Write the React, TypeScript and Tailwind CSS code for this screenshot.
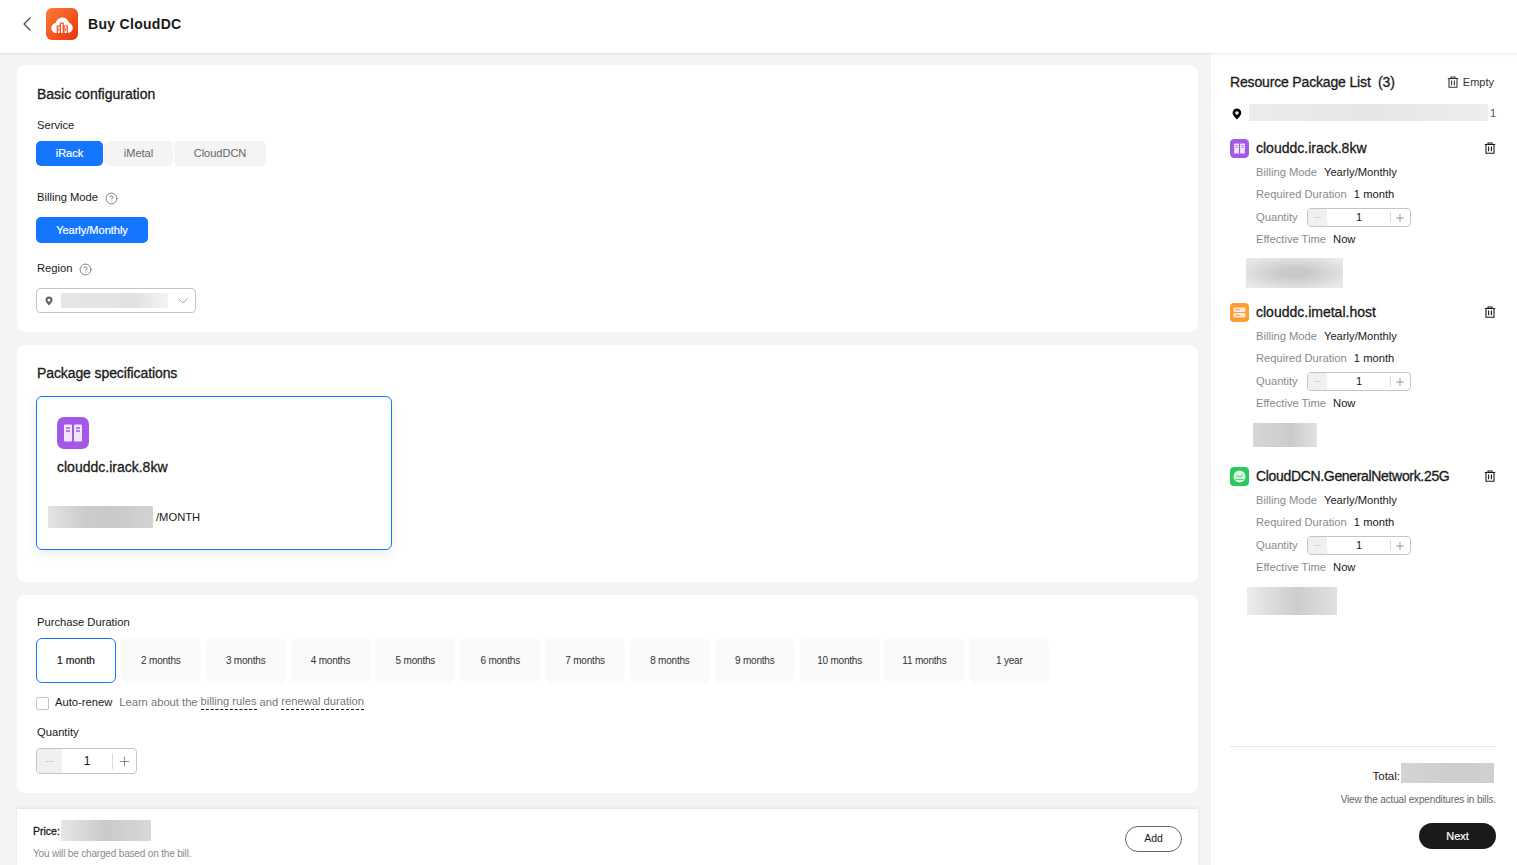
import React from "react";
import { ChevronLeft, ChevronDown, CircleHelp, Minus, Plus } from "lucide-react";

const FONT = "font-['Liberation_Sans',Arial,sans-serif]";
const MED = "[-webkit-text-stroke:0.3px_currentColor]";

function Blur({ className }: { className: string }) {
  return <div className={`shrink-0 ${className}`} />;
}

function Trash({ className }: { className: string }) {
  return (
    <svg viewBox="0 0 12 12" className={className} fill="none" stroke="currentColor">
      <path d="M0.8 2.5H11.2M4 2.5V1H8V2.5M2 2.5V11.3H10V2.5M4.6 4.6V9.2M7.4 4.6V9.2" strokeWidth="1.1" />
    </svg>
  );
}

function Pin({ className }: { className: string }) {
  return (
    <svg viewBox="0 0 12 14" className={className}>
      <path fillRule="evenodd" d="M6 0.3A5.3 5.3 0 0 0 0.7 5.6C0.7 9 6 13.8 6 13.8S11.3 9 11.3 5.6A5.3 5.3 0 0 0 6 0.3ZM6 3.6A2.1 2.1 0 1 1 6 7.8A2.1 2.1 0 0 1 6 3.6Z" fill="currentColor" />
    </svg>
  );
}

function RackIcon({ className }: { className: string }) {
  return (
    <svg viewBox="0 0 32 32" className={className}>
      <rect width="32" height="32" rx="7" fill="#a259e8" />
      <rect x="7" y="7.5" width="8" height="17" rx="1" fill="#f1e6fc" />
      <rect x="17" y="7.5" width="8" height="17" rx="1" fill="#f1e6fc" />
      <path d="M9 11H13M9 14H13M19 11H23M19 14H23" stroke="#a259e8" strokeWidth="1.3" />
    </svg>
  );
}

function HostIcon({ className }: { className: string }) {
  return (
    <svg viewBox="0 0 19 19" className={className}>
      <rect width="19" height="19" rx="4" fill="#ff9c38" />
      <rect x="3.5" y="4.5" width="12" height="4.4" rx="1" fill="#ffecd8" />
      <rect x="3.5" y="10.1" width="12" height="4.4" rx="1" fill="#ffecd8" />
      <path d="M5.5 6.7H10M5.5 12.3H10" stroke="#ff9c38" strokeWidth="1" />
    </svg>
  );
}

function NetIcon({ className }: { className: string }) {
  return (
    <svg viewBox="0 0 19 19" className={className}>
      <rect width="19" height="19" rx="4" fill="#2bc85c" />
      <circle cx="9.5" cy="9.5" r="6" fill="#dcf7e4" />
      <path d="M6 10.5L8 8.5L10 10.5L13 7.5" stroke="#2bc85c" strokeWidth="1" fill="none" />
      <path d="M5.5 12.5H13.5" stroke="#2bc85c" strokeWidth="0.8" />
    </svg>
  );
}

function Logo() {
  return (
    <div className="w-8 h-8 rounded-[6px] bg-[linear-gradient(135deg,#ff7d33,#e8340e)] flex items-center justify-center shrink-0">
      <svg viewBox="0 0 32 32" className="w-8 h-8">
        <path d="M10.5 25C7.5 25 5.3 22.7 5.3 19.9C5.3 17.3 7.2 15.2 9.7 14.9C10.6 11.7 13.2 9.4 16.4 9.4C19.8 9.4 22.5 11.9 23.1 15.1C25.2 15.6 26.7 17.5 26.7 19.8C26.7 22.7 24.5 25 21.6 25Z" fill="#fff" />
        <path d="M11.3 25V18.2H14.4V25M14.4 25V15.2H17.2V25M18 25V18H21.3V25" fill="none" stroke="#f4502a" strokeWidth="1.2" />
        <path d="M12.8 20V23M19.6 20V23" stroke="#f4502a" strokeWidth="0.9" />
      </svg>
    </div>
  );
}

function Stepper({ large }: { large?: boolean }) {
  return large ? (
    <div className="flex w-[101px] h-[26px] border border-[#c4c4c4] rounded-[4px] overflow-hidden items-center">
      <div className="w-[25px] h-full bg-[#f0f0f0] flex items-center justify-center text-[#c0c0c0]">
        <Minus size={13} strokeWidth={1.2} />
      </div>
      <div className="flex-1 text-center text-[12px] text-[#191919]">1</div>
      <div className="w-px h-[16px] bg-[#dcdcdc]" />
      <div className="w-[23px] flex items-center justify-center text-[#666]">
        <Plus size={15} strokeWidth={1.2} />
      </div>
    </div>
  ) : (
    <div className="flex w-[104px] h-[19px] border border-[#c4c4c4] rounded-[4px] overflow-hidden items-center">
      <div className="w-[19px] h-full bg-[#f0f0f0] flex items-center justify-center text-[#c0c0c0]">
        <Minus size={11} strokeWidth={1.3} />
      </div>
      <div className="flex-1 pl-[2px] text-center text-[11px] leading-none text-[#191919]">1</div>
      <div className="w-px h-[11px] bg-[#dcdcdc]" />
      <div className="w-[19px] flex items-center justify-center text-[#666]">
        <Plus size={12} strokeWidth={1.3} />
      </div>
    </div>
  );
}

function Item({ icon, name, blur, nameClass }: { icon: React.ReactNode; name: string; blur: string; nameClass?: string }) {
  const row = "flex items-center gap-[7px] pl-[26px] text-[11.2px] leading-none";
  const k = "text-[#8a8a8a]";
  const v = "text-[#191919]";
  return (
    <div className="h-[164px] shrink-0">
      <div className="flex items-center h-[20px]">
        {icon}
        <span className={`ml-[7px] text-[14px] text-[#191919] ${MED} ${nameClass ?? ""}`}>{name}</span>
        <Trash className="w-[12px] h-[12px] ml-auto -mt-px text-[#191919]" />
      </div>
      <div className="mt-[4px]">
        <div className={`${row} h-[22px]`}><span className={k}>Billing Mode</span><span className={v}>Yearly/Monthly</span></div>
        <div className={`${row} h-[22px]`}><span className={k}>Required Duration</span><span className={v}>1 month</span></div>
        <div className={`${row} h-[23px] gap-[9px]`}><span className={k}>Quantity</span><Stepper /></div>
        <div className={`${row} h-[22px]`}><span className={k}>Effective Time</span><span className={v}>Now</span></div>
      </div>
      <Blur className={blur} />
    </div>
  );
}

const MONTHS = ["2 months", "3 months", "4 months", "5 months", "6 months", "7 months", "8 months", "9 months", "10 months", "11 months", "1 year"];

export default function App() {
  const label = "h-[16px] pt-[2px] flex items-center text-[11.2px] text-[#191919] leading-none";
  const tab = "h-[25px] flex items-center justify-center bg-[#f4f4f4] text-[#666] text-[11px] rounded-[5px]";
  const help = "text-[#666]";
  return (
    <div className={`${FONT} h-screen overflow-hidden flex flex-col bg-[#f4f4f4] text-[#191919]`}>
      <header className="h-[53px] pb-[5px] shrink-0 bg-white shadow-[0_1px_3px_rgba(0,0,0,0.1)] flex items-center relative z-10">
        <ChevronLeft size={24} strokeWidth={1.2} className="ml-[15px] text-[#444]" />
        <div className="ml-[7px]"><Logo /></div>
        <h1 className="ml-[10px] text-[14px] font-bold tracking-[0.3px] text-[#191919]">Buy CloudDC</h1>
      </header>

      <div className="flex-1 flex min-h-0">
        <main className="w-[1211px] shrink-0 pl-[17px] pr-[13px] pt-[12px] flex flex-col">
          <section className="bg-white rounded-[8px] px-[20px] pt-[20px] pb-[19px]">
            <h2 className={`h-[18px] flex items-center text-[14px] leading-none ${MED}`}>Basic configuration</h2>
            <div className={`${label} mt-[14px]`}>Service</div>
            <div className="flex mt-[8px] gap-px -ml-px">
              <div className={`${tab} w-[67px] !bg-[#1476ff] !text-white [-webkit-text-stroke:0.2px_currentColor]`}>iRack</div>
              <div className={`${tab} w-[69px]`}>iMetal</div>
              <div className={`${tab} w-[92px]`}>CloudDCN</div>
            </div>
            <div className={`${label} mt-[23px] gap-[7px]`}>Billing Mode <CircleHelp size={13} strokeWidth={1.5} className={help} /></div>
            <div className="mt-[12px] -ml-px h-[26px] w-[112px] rounded-[5px] bg-[#1476ff] text-white text-[11px] flex items-center justify-center [-webkit-text-stroke:0.2px_currentColor]">Yearly/Monthly</div>
            <div className={`${label} mt-[17px] gap-[7px]`}>Region <CircleHelp size={13} strokeWidth={1.5} className={help} /></div>
            <div className="mt-[12px] -ml-px h-[25px] w-[160px] border border-[#c4c4c4] rounded-[4px] flex items-center">
              <Pin className="w-[8px] h-[10px] ml-[8px] text-[#666]" />
              <Blur className="ml-[8px] w-[107px] h-[15px] bg-[linear-gradient(90deg,#e6e6e6,#e2e2e2_70%,#f4f4f4)]" />
              <ChevronDown size={16} strokeWidth={1.1} className="ml-[7px] text-[#888]" />
            </div>
          </section>

          <section className="mt-[13px] bg-white rounded-[8px] px-[20px] pt-[19px] pb-[32px]">
            <h2 className={`h-[18px] flex items-center text-[14px] leading-none tracking-[-0.1px] ${MED}`}>Package specifications</h2>
            <div className="mt-[14px] -ml-px w-[356px] h-[154px] border border-[#1476ff] rounded-[6px] shadow-[0_4px_12px_rgba(0,0,0,0.08)] pt-[20px]">
              <RackIcon className="w-8 h-8 ml-[20px]" />
              <div className={`ml-[20px] mt-[9px] h-[18px] flex items-center text-[14px] leading-none ${MED}`}>clouddc.irack.8kw</div>
              <div className="mt-[30px] ml-[11px] flex items-center">
                <Blur className="w-[105px] h-[22px] bg-[linear-gradient(90deg,#e4e4e4,#cccccc_35%,#c9c9c9_60%,#d2d2d2)]" />
                <span className="ml-[3px] pt-[2px] text-[11.2px] leading-none">/MONTH</span>
              </div>
            </div>
          </section>

          <section className="mt-[13px] bg-white rounded-[8px] px-[20px] pt-[19px] pb-[19px]">
            <div className={label}>Purchase Duration</div>
            <div className="flex mt-[8px] gap-[4.85px] -ml-px">
              <div className="w-[80px] h-[45px] rounded-[6px] border border-[#1476ff] flex items-center justify-center text-[10.5px] text-[#191919] [-webkit-text-stroke:0.2px_currentColor]">1 month</div>
              {MONTHS.map((m) => (
                <div key={m} className="w-[80px] h-[45px] rounded-[6px] bg-[#fafafa] flex items-center justify-center text-[10px] tracking-[-0.2px] text-[#333]">{m}</div>
              ))}
            </div>
            <div className="h-[16px] mt-[12px] flex items-center text-[11.2px] leading-none">
              <div className="w-[13px] h-[13px] -ml-px border border-[#c4c4c4] rounded-[2px] bg-white mt-[1px]" />
              <span className="ml-[6px] text-[#191919]">Auto-renew</span>
              <span className="ml-[7px] text-[#777]">Learn about the</span>
              <span className="ml-[3px] text-[#777] border-b border-dashed border-[#191919] pb-px">billing rules</span>
              <span className="ml-[3px] text-[#777]">and</span>
              <span className="ml-[3px] text-[#777] border-b border-dashed border-[#191919] pb-px">renewal duration</span>
            </div>
            <div className={`${label} mt-[13px]`}>Quantity</div>
            <div className="mt-[8px] -ml-px"><Stepper large /></div>
          </section>

          <footer className="mt-[16px] flex-1 bg-white shadow-[0_-1px_3px_rgba(0,0,0,0.08)] pl-[16px] pr-[16px] flex items-start">
            <div>
              <div className="flex items-center mt-[11px]">
                <span className={`pt-[2px] text-[10.5px] leading-none ${MED}`}>Price:</span>
                <Blur className="ml-px w-[90px] h-[21px] bg-[linear-gradient(90deg,#e6e6e6,#cacaca_50%,#d8d8d8)]" />
              </div>
              <div className="mt-[8px] text-[10px] tracking-[-0.17px] leading-none text-[#8a8a8a]">You will be charged based on the bill.</div>
            </div>
            <div className="ml-auto mt-[17px] w-[57px] h-[26px] rounded-full border border-[#666] flex items-center justify-center text-[10.5px]">Add</div>
          </footer>
        </main>

        <aside className="flex-1 bg-white pl-[19px] pr-[21px] pt-[18px] flex flex-col min-w-0">
          <div className="flex items-center h-[20px] shrink-0 pt-[2px]">
            <span className={`text-[14px] leading-none tracking-[-0.16px] ${MED}`}>Resource Package List&nbsp;&nbsp;(3)</span>
            <Trash className="ml-auto w-[12px] h-[12px] text-[#333]" />
            <span className="ml-[4px] mr-[2px] text-[11px] leading-none text-[#333]">Empty</span>
          </div>
          <div className="flex items-center h-[18px] mt-[12px] shrink-0">
            <Pin className="ml-[2px] mt-[3px] w-[10px] h-[12px] text-black" />
            <Blur className="ml-[7px] w-[239px] h-[17px] bg-[linear-gradient(90deg,#ececec,#e6e6e6_50%,#ededed)]" />
            <span className="ml-[2px] mt-[3px] text-[11px] leading-none text-[#555]">1</span>
          </div>
          <div className="mt-[17px] flex-1 min-h-0">
            <Item icon={<RackIcon className="w-[19px] h-[19px]" />} name="clouddc.irack.8kw" blur="mt-[7px] ml-[16px] w-[97px] h-[30px] bg-[radial-gradient(ellipse_at_center,#c9c9c9_20%,#e8e8e8_85%)]" />
            <Item icon={<HostIcon className="w-[19px] h-[19px]" />} name="clouddc.imetal.host" blur="mt-[8px] ml-[23px] w-[64px] h-[24px] bg-[linear-gradient(90deg,#d6d6d6,#cbcbcb_60%,#e2e2e2)]" />
            <Item icon={<NetIcon className="w-[19px] h-[19px]" />} name="CloudDCN.GeneralNetwork.25G" nameClass="tracking-[-0.33px]" blur="mt-[8px] ml-[17px] w-[90px] h-[28px] bg-[linear-gradient(90deg,#ececec,#cdcdcd_55%,#e0e0e0)]" />
          </div>
          <div className="h-[119px] shrink-0 border-t border-[#e6e6e6] flex flex-col items-end">
            <div className="flex items-end mt-[16px] h-[20px] mr-[2px]">
              <span className="text-[11.5px] leading-none mb-px">Total:</span>
              <Blur className="ml-px w-[93px] h-[20px] bg-[linear-gradient(90deg,#d4d4d4,#cdcdcd_60%,#d0d0d0)]" />
            </div>
            <div className="mt-[12px] text-[10px] tracking-[-0.15px] leading-none text-[#666]">View the actual expenditures in bills.</div>
            <div className="mt-[18px] w-[77px] h-[26px] rounded-full bg-[#1a1a1a] text-white text-[11px] flex items-center justify-center [-webkit-text-stroke:0.2px_currentColor]">Next</div>
          </div>
        </aside>
      </div>
    </div>
  );
}
